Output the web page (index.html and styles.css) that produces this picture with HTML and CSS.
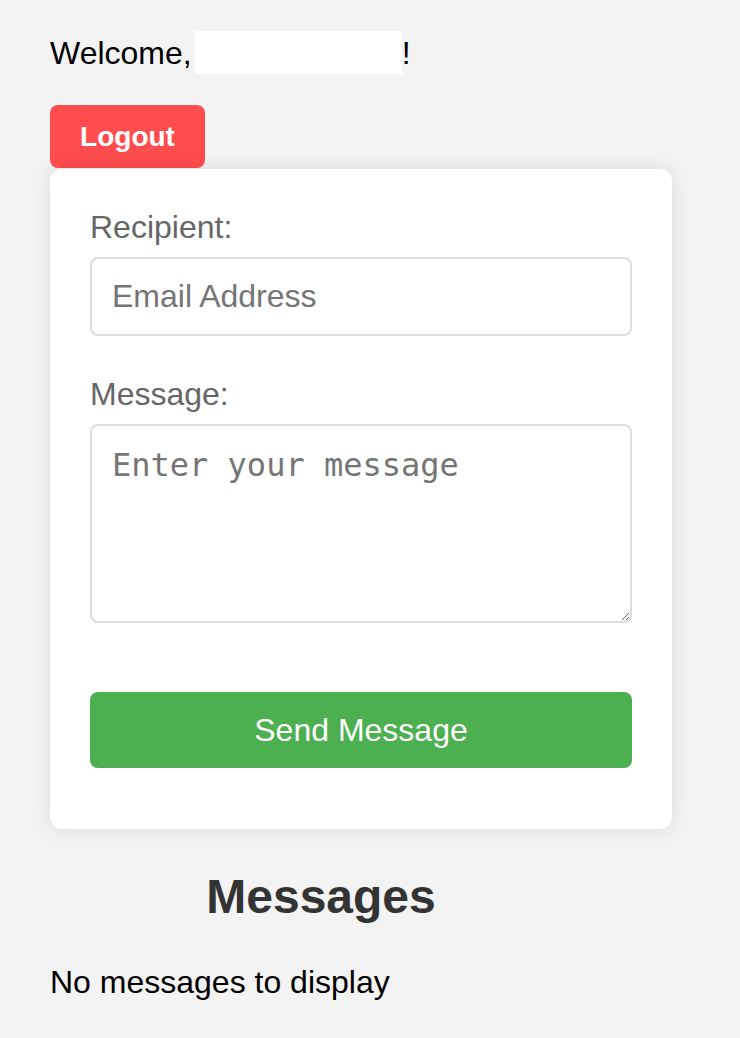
FILE: index.html
```html
<!DOCTYPE html>
<html lang="en">
<head>
<meta charset="utf-8">
<title>Messages</title>
<link rel="stylesheet" href="styles.css">
</head>
<body>
<div class="page">
  <div class="welcome">Welcome,<span class="name-mask"></span>!</div>
  <button class="logout" type="button">Logout</button>
  <form class="card">
    <label class="field-label" for="recipient">Recipient:</label>
    <input class="field-input" id="recipient" type="email" placeholder="Email Address">
    <label class="field-label" for="message">Message:</label>
    <textarea class="field-textarea" id="message" placeholder="Enter your message"></textarea>
    <button class="send" type="button">Send Message</button>
  </form>
  <section class="messages">
    <h2 class="messages-title">Messages</h2>
    <p class="messages-empty">No messages to display</p>
  </section>
</div>
</body>
</html>
```

FILE: styles.css
```css
html, body {
  margin: 0;
  padding: 0;
}

body {
  background: #f3f3f3;
  font-family: "Liberation Sans", Arial, Helvetica, sans-serif;
  font-size: 32px;
  color: #000;
}

.page {
  padding: 32px 0 0 50px;
}

.welcome {
  display: flex;
  align-items: center;
  height: 43px;
}

.name-mask {
  display: block;
  width: 207px;
  height: 43px;
  margin: -2px 0 0 3px;
  background: #fff;
}

.logout {
  display: block;
  margin-top: 30px;
  width: 155px;
  height: 63px;
  padding: 0;
  border: none;
  border-radius: 8px;
  background: #ff4d4f;
  color: #fff;
  font-family: "Liberation Sans", Arial, sans-serif;
  font-weight: bold;
  font-size: 28px;
}

.card {
  box-sizing: border-box;
  width: 622px;
  margin-top: 1px;
  padding: 40px 40px 61px;
  background: #fff;
  border-radius: 12px;
  box-shadow: 0 0 20px rgba(0, 0, 0, 0.1);
}

.field-label {
  display: block;
  margin-bottom: 11px;
  color: #666;
  font-size: 32px;
}

.field-input,
.field-textarea {
  display: block;
  box-sizing: border-box;
  width: 100%;
  margin: 0;
  border: 2px solid #ddd;
  border-radius: 8px;
  background: #fff;
  color: #000;
  font-size: 32px;
  outline: none;
}

.field-input {
  height: 79px;
  margin-bottom: 40px;
  padding: 0 20px;
  font-family: "Liberation Sans", Arial, sans-serif;
}

.field-textarea {
  height: 199px;
  margin-bottom: 69px;
  padding: 20px 20px;
  font-family: "DejaVu Sans Mono", monospace;
}

.field-input::placeholder,
.field-textarea::placeholder {
  color: #757575;
  opacity: 1;
}

.send {
  display: block;
  width: 100%;
  height: 76px;
  padding: 0;
  border: none;
  border-radius: 8px;
  background: #4caf50;
  color: #fff;
  font-family: "Liberation Sans", Arial, sans-serif;
  font-size: 32px;
}

.messages {
  width: 542px;
}

.messages-title {
  margin: 40px 0;
  text-align: center;
  font-size: 48px;
  font-weight: bold;
  color: #333;
}

.messages-empty {
  margin: 40px 0;
  font-size: 32px;
}
```
